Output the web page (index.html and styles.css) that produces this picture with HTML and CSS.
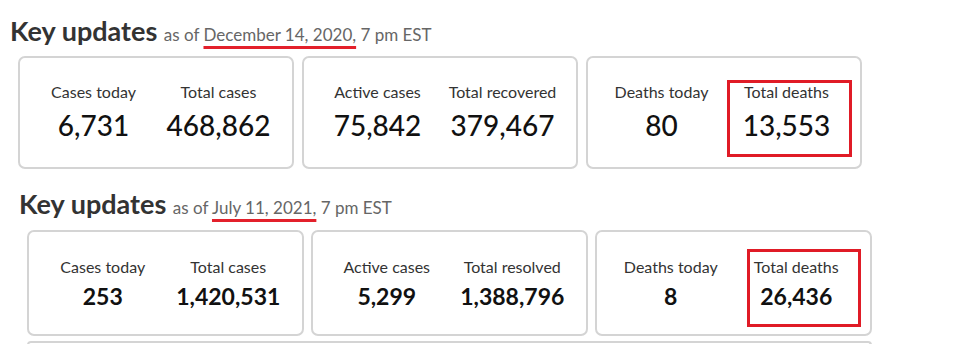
FILE: index.html
```html
<!DOCTYPE html>
<html lang="en">
<head>
<meta charset="utf-8">
<title>Key updates</title>
<link rel="stylesheet" href="styles.css">
</head>
<body>
<section class="update update--a">
  <h2 class="heading">Key updates <span class="asof">as of <span class="date">December 14, 2020,</span> 7 pm EST</span></h2>
  <div class="cards">
    <div class="card">
      <div class="stat"><div class="label">Cases today</div><div class="num">6,731</div></div>
      <div class="stat"><div class="label">Total cases</div><div class="num">468,862</div></div>
    </div>
    <div class="card">
      <div class="stat"><div class="label">Active cases</div><div class="num">75,842</div></div>
      <div class="stat"><div class="label">Total recovered</div><div class="num">379,467</div></div>
    </div>
    <div class="card">
      <div class="stat"><div class="label">Deaths today</div><div class="num">80</div></div>
      <div class="stat mark mark--a"><div class="label">Total deaths</div><div class="num">13,553</div></div>
    </div>
  </div>
</section>
<section class="update update--b">
  <h2 class="heading">Key updates <span class="asof">as of <span class="date">July 11, 2021,</span> 7 pm EST</span></h2>
  <div class="cards">
    <div class="card">
      <div class="stat"><div class="label">Cases today</div><div class="num">253</div></div>
      <div class="stat"><div class="label">Total cases</div><div class="num">1,420,531</div></div>
    </div>
    <div class="card">
      <div class="stat"><div class="label">Active cases</div><div class="num">5,299</div></div>
      <div class="stat"><div class="label">Total resolved</div><div class="num">1,388,796</div></div>
    </div>
    <div class="card">
      <div class="stat"><div class="label">Deaths today</div><div class="num">8</div></div>
      <div class="stat mark mark--b"><div class="label">Total deaths</div><div class="num">26,436</div></div>
    </div>
  </div>
  <div class="card card--wide"></div>
</section>
</body>
</html>
```
FILE: styles.css
```css
html, body {
  margin: 0;
  padding: 0;
  background: #ffffff;
}
body {
  font-family: Lato, "Liberation Sans", sans-serif;
  color: #333333;
  width: 979px;
  height: 344px;
  overflow: hidden;
}
.update--a {
  padding: 15px 0 0 10px;
}
.update--b {
  padding: 19px 0 0 19px;
}
.heading {
  margin: 0;
  font-size: 27px;
  font-weight: 700;
  line-height: 1.2;
  color: #333333;
  white-space: nowrap;
}
.asof {
  font-size: 17px;
  font-weight: 400;
  color: #666666;
}
.date {
  text-decoration: underline;
  text-decoration-color: #e3202b;
  text-decoration-thickness: 3px;
  text-underline-offset: 5px;
  text-decoration-skip-ink: none;
}
.cards {
  display: flex;
  gap: 8px;
  margin: 9px 0 0 8px;
}
.update--b .cards {
  gap: 7px;
}
.card {
  box-sizing: border-box;
  width: 276px;
  border: 2px solid #d4d4d4;
  border-radius: 7px;
  display: grid;
  grid-template-columns: 1fr 1fr;
  padding: 24px 11px 25px;
  background: #fff;
}
.update--b .card {
  width: 277px;
  padding: 25px 11px 24px;
}
.update--b .card--wide {
  width: 845px;
  height: 4px;
  padding: 0;
  border-bottom: 0;
  border-radius: 7px 7px 0 0;
  margin: 5px 0 0 8px;
}
.stat {
  text-align: center;
  position: relative;
}
.label {
  font-size: 16px;
  line-height: 1.2;
  color: #333333;
}
.num {
  margin-top: 7px;
  font-size: 28px;
  font-weight: 500;
  line-height: 1.2;
  color: #111111;
}
.update--b .num {
  font-size: 23px;
  font-weight: 700;
}
.mark::after {
  content: "";
  position: absolute;
  border: 3px solid #e01b26;
  box-sizing: border-box;
}
.mark--a::after {
  top: -2px;
  left: 3px;
  width: 125px;
  height: 77px;
}
.mark--b::after {
  top: -8px;
  left: 13px;
  width: 114px;
  height: 78px;
}
```
